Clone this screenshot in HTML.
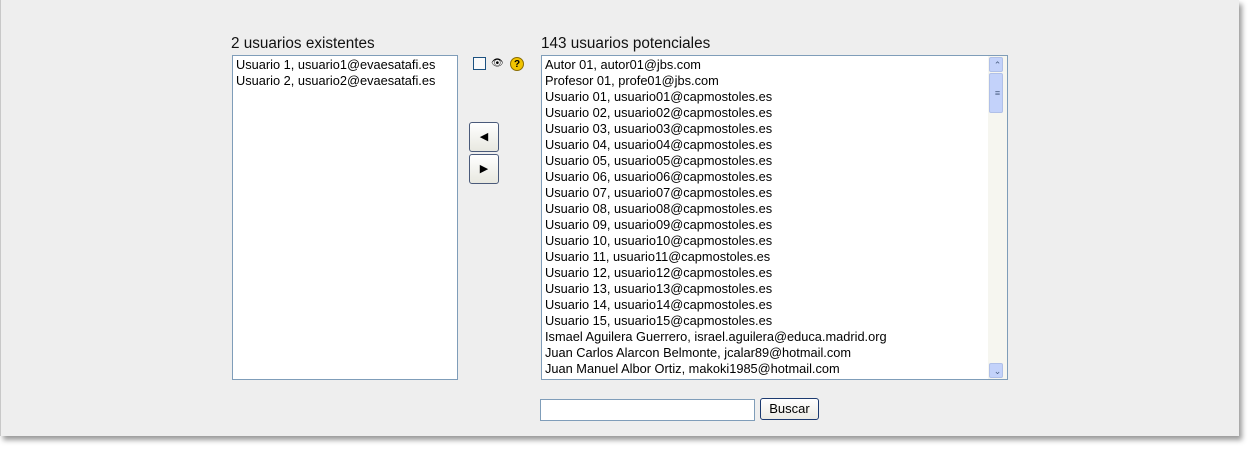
<!DOCTYPE html>
<html><head><style>
body{margin:0;width:1255px;height:454px;background:#fff;position:relative;overflow:hidden;font-family:"Liberation Sans",Arial,sans-serif}
.panel{position:absolute;left:0;top:0;width:1238px;height:436px;background:#eeeeee;border-left:1px solid #c8c8c8;box-shadow:3px 4px 5px #999}
.lbl{position:absolute;font-size:15.3px;color:#111;top:35px}
.box{position:absolute;background:#fff;border:1px solid #7f9db9;font-size:12.8px;color:#000;line-height:16px;overflow:hidden}
.box div{padding-left:3px;white-space:nowrap}
.btn{position:absolute;width:28px;height:28px;border:1px solid #4a5a7a;border-radius:3px;background:linear-gradient(#fff,#e8e8e0);font-size:11px;text-align:center;line-height:28px;color:#000}
.sb{position:absolute;right:0;top:0;width:16px;height:100%;background:#f6f6f0}
.sbb{position:absolute;left:1px;width:14px;height:15px;background:#c3d2fa;border:1px solid #b0c0e8;border-radius:2px;box-sizing:border-box;font-size:9px;line-height:14px;text-align:center;color:#4d6185}
</style></head><body>
<div class="panel"></div>
<div class="lbl" style="left:231px">2 usuarios existentes</div>
<div class="lbl" style="left:541px">143 usuarios potenciales</div>
<div class="box" style="left:232px;top:55px;width:224px;height:322px;padding-top:1px">
<div>Usuario 1, usuario1@evaesatafi.es</div><div>Usuario 2, usuario2@evaesatafi.es</div></div>
<div style="position:absolute;left:473px;top:57px;width:11px;height:11px;border:1px solid #1c5180;background:#fafafa"></div>
<div style="position:absolute;left:491px;top:58px;font-size:10px">👁</div>
<div style="position:absolute;left:510px;top:57px;width:14px;height:14px;border-radius:50%;background:#f2c400;border:1px solid #8a6d00;box-sizing:border-box;font-size:10px;font-weight:bold;text-align:center;line-height:13px">?</div>
<div class="btn" style="left:469px;top:122px">◀</div>
<div class="btn" style="left:469px;top:154px">▶</div>
<div class="box" style="left:541px;top:55px;width:465px;height:322px;padding-top:1px">
<div>Autor 01, autor01@jbs.com</div><div>Profesor 01, profe01@jbs.com</div>
<div>Usuario 01, usuario01@capmostoles.es</div><div>Usuario 02, usuario02@capmostoles.es</div><div>Usuario 03, usuario03@capmostoles.es</div><div>Usuario 04, usuario04@capmostoles.es</div><div>Usuario 05, usuario05@capmostoles.es</div><div>Usuario 06, usuario06@capmostoles.es</div><div>Usuario 07, usuario07@capmostoles.es</div><div>Usuario 08, usuario08@capmostoles.es</div><div>Usuario 09, usuario09@capmostoles.es</div><div>Usuario 10, usuario10@capmostoles.es</div><div>Usuario 11, usuario11@capmostoles.es</div><div>Usuario 12, usuario12@capmostoles.es</div><div>Usuario 13, usuario13@capmostoles.es</div><div>Usuario 14, usuario14@capmostoles.es</div><div>Usuario 15, usuario15@capmostoles.es</div>
<div>Ismael Aguilera Guerrero, israel.aguilera@educa.madrid.org</div><div>Juan Carlos Alarcon Belmonte, jcalar89@hotmail.com</div><div>Juan Manuel Albor Ortiz, makoki1985@hotmail.com</div>
<div class="sb"><div class="sbb" style="top:1px">⌃</div><div class="sbb" style="top:17px;height:40px;line-height:38px">≡</div><div class="sbb" style="bottom:1px">⌄</div></div>
</div>
<div style="position:absolute;left:540px;top:399px;width:213px;height:20px;background:#fff;border:1px solid #7f9db9"></div>
<div style="position:absolute;left:760px;top:398px;width:57px;height:20px;border:1px solid #1c3a70;border-radius:3px;background:linear-gradient(#fff,#ecebe4);font-size:13px;text-align:center;line-height:20px">Buscar</div>
</body></html>
